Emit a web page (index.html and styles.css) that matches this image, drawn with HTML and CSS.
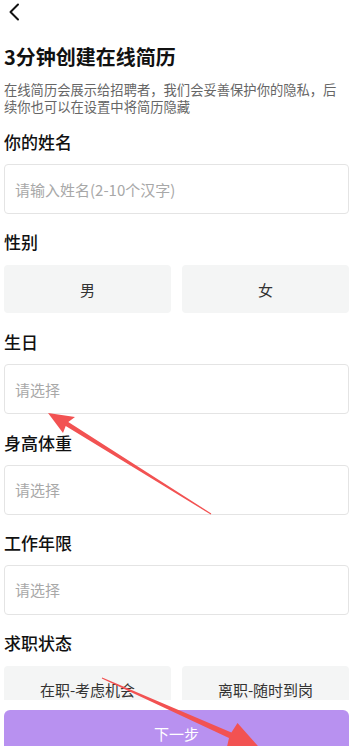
FILE: index.html
```html
<!DOCTYPE html>
<html>
  <head>
    <title>创建在线简历</title>
    <meta charset='utf-8'>
    <link rel="stylesheet" href="styles.css">
  </head>
  <body>
    <div class="page">
      <div class="nav">
        <svg class="back" width="12" height="18" viewBox="0 0 12 18">
          <path d="M10 1.5 L2.5 9 L10 16.5" fill="none" stroke="#111" stroke-width="2" stroke-linecap="round" stroke-linejoin="round"/>
        </svg>
      </div>

      <h1 class="title">3分钟创建在线简历</h1>
      <p class="intro">在线简历会展示给招聘者，我们会妥善保护你的隐私，后续你也可以在设置中将简历隐藏</p>

      <div class="field">
        <div class="label">你的姓名</div>
        <div class="input">请输入姓名(2-10个汉字)</div>
      </div>

      <div class="field">
        <div class="label">性别</div>
        <div class="choices">
          <div class="choice">男</div>
          <div class="choice">女</div>
        </div>
      </div>

      <div class="field">
        <div class="label">生日</div>
        <div class="input">请选择</div>
      </div>

      <div class="field">
        <div class="label">身高体重</div>
        <div class="input">请选择</div>
      </div>

      <div class="field">
        <div class="label">工作年限</div>
        <div class="input">请选择</div>
      </div>

      <div class="field last">
        <div class="label">求职状态</div>
        <div class="choices">
          <div class="choice">在职-考虑机会</div>
          <div class="choice">离职-随时到岗</div>
        </div>
      </div>
    </div>

    <div class="footer">
      <div class="next">下一步</div>
    </div>

    <!-- annotation arrows drawn over the screenshot -->
    <svg class="marks" width="351" height="746" viewBox="0 0 351 746">
      <polygon fill="#f25252" points="48,413 75,417 68.3,421.9 211.3,513.6 210.7,514.4 65.7,426.1 63,433"/>
      <polygon fill="#f25252" points="259.6,747.9 237.5,723.1 231.4,732.4 102.2,677.4 101.8,678.6 229,738 226.5,748.9"/>
    </svg>
  </body>
</html>
```

FILE: styles.css
```css
body {
  margin: 0;
  background: #fff;
  font-family: "Noto Sans CJK SC", "Noto Sans", sans-serif;
  color: #1a1a1a;
}

.page {
  padding: 0 2px 0 4px;
}

/* Top bar */
.nav {
  height: 36px;
  display: flex;
  align-items: flex-start;
  padding-top: 3px;
  box-sizing: border-box;
}
.nav .back {
  margin-left: 4px;
}

/* Heading */
.title {
  margin: 7px 0 0;
  font-size: 20px;
  line-height: 28px;
  font-weight: 700;
  color: #111;
}
.intro {
  margin: 11px 0 0;
  font-size: 13.3px;
  line-height: 16.5px;
  color: #666;
}

/* Form fields */
.field {
  height: 100.2px;
}
.intro + .field {
  margin-top: 15px;
}
.field.last {
  height: auto;
}
.label {
  font-size: 17px;
  line-height: 24px;
  font-weight: 500;
  color: #111;
}
.input {
  margin-top: 10px;
  height: 50px;
  box-sizing: border-box;
  border: 1px solid #e4e4e4;
  border-radius: 4px;
  padding-left: 10px;
  display: flex;
  align-items: center;
  font-size: 15px;
  color: #a8a8a8;
}
.choices {
  margin-top: 11px;
  display: grid;
  grid-template-columns: 1fr 1fr;
  gap: 11px;
}
.choice {
  height: 48px;
  border-radius: 4px;
  background: #f4f5f5;
  display: flex;
  align-items: center;
  justify-content: center;
  font-size: 15px;
  color: #333;
}

/* Fixed bottom button */
.footer {
  position: fixed;
  left: 0;
  right: 0;
  bottom: 0;
  height: 46px;
  box-sizing: border-box;
  padding: 10px 2px 0 4px;
  background: #fff;
  overflow: hidden;
}
.next {
  height: 46px;
  border-radius: 6px;
  background: #b891f0;
  color: #fff;
  font-size: 15px;
  display: flex;
  align-items: center;
  justify-content: center;
}

.marks {
  position: fixed;
  left: 0;
  top: 0;
  pointer-events: none;
}
```
